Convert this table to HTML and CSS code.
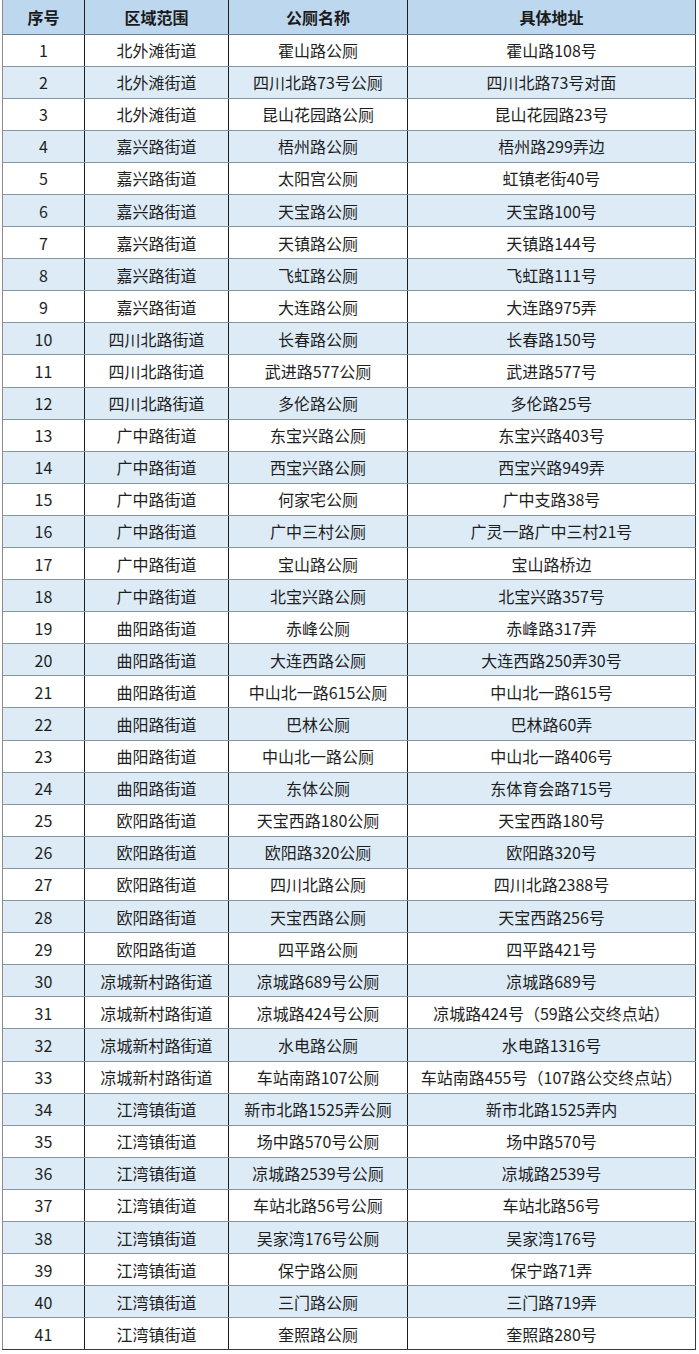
FILE: index.html
```html
<!DOCTYPE html>
<html lang="zh-CN">
<head>
<meta charset="utf-8">
<title>公厕列表</title>
<link rel="stylesheet" href="styles.css">
</head>
<body>
<table class="toilets">
<colgroup>
<col class="c-no"><col class="c-area"><col class="c-name"><col class="c-addr">
</colgroup>
<thead>
<tr><th>序号</th><th>区域范围</th><th>公厕名称</th><th>具体地址</th></tr>
</thead>
<tbody>
<tr><td>1</td><td>北外滩街道</td><td>霍山路公厕</td><td>霍山路108号</td></tr>
<tr><td>2</td><td>北外滩街道</td><td>四川北路73号公厕</td><td>四川北路73号对面</td></tr>
<tr><td>3</td><td>北外滩街道</td><td>昆山花园路公厕</td><td>昆山花园路23号</td></tr>
<tr><td>4</td><td>嘉兴路街道</td><td>梧州路公厕</td><td>梧州路299弄边</td></tr>
<tr><td>5</td><td>嘉兴路街道</td><td>太阳宫公厕</td><td>虹镇老街40号</td></tr>
<tr><td>6</td><td>嘉兴路街道</td><td>天宝路公厕</td><td>天宝路100号</td></tr>
<tr><td>7</td><td>嘉兴路街道</td><td>天镇路公厕</td><td>天镇路144号</td></tr>
<tr><td>8</td><td>嘉兴路街道</td><td>飞虹路公厕</td><td>飞虹路111号</td></tr>
<tr><td>9</td><td>嘉兴路街道</td><td>大连路公厕</td><td>大连路975弄</td></tr>
<tr><td>10</td><td>四川北路街道</td><td>长春路公厕</td><td>长春路150号</td></tr>
<tr><td>11</td><td>四川北路街道</td><td>武进路577公厕</td><td>武进路577号</td></tr>
<tr><td>12</td><td>四川北路街道</td><td>多伦路公厕</td><td>多伦路25号</td></tr>
<tr><td>13</td><td>广中路街道</td><td>东宝兴路公厕</td><td>东宝兴路403号</td></tr>
<tr><td>14</td><td>广中路街道</td><td>西宝兴路公厕</td><td>西宝兴路949弄</td></tr>
<tr><td>15</td><td>广中路街道</td><td>何家宅公厕</td><td>广中支路38号</td></tr>
<tr><td>16</td><td>广中路街道</td><td>广中三村公厕</td><td>广灵一路广中三村21号</td></tr>
<tr><td>17</td><td>广中路街道</td><td>宝山路公厕</td><td>宝山路桥边</td></tr>
<tr><td>18</td><td>广中路街道</td><td>北宝兴路公厕</td><td>北宝兴路357号</td></tr>
<tr><td>19</td><td>曲阳路街道</td><td>赤峰公厕</td><td>赤峰路317弄</td></tr>
<tr><td>20</td><td>曲阳路街道</td><td>大连西路公厕</td><td>大连西路250弄30号</td></tr>
<tr><td>21</td><td>曲阳路街道</td><td>中山北一路615公厕</td><td>中山北一路615号</td></tr>
<tr><td>22</td><td>曲阳路街道</td><td>巴林公厕</td><td>巴林路60弄</td></tr>
<tr><td>23</td><td>曲阳路街道</td><td>中山北一路公厕</td><td>中山北一路406号</td></tr>
<tr><td>24</td><td>曲阳路街道</td><td>东体公厕</td><td>东体育会路715号</td></tr>
<tr><td>25</td><td>欧阳路街道</td><td>天宝西路180公厕</td><td>天宝西路180号</td></tr>
<tr><td>26</td><td>欧阳路街道</td><td>欧阳路320公厕</td><td>欧阳路320号</td></tr>
<tr><td>27</td><td>欧阳路街道</td><td>四川北路公厕</td><td>四川北路2388号</td></tr>
<tr><td>28</td><td>欧阳路街道</td><td>天宝西路公厕</td><td>天宝西路256号</td></tr>
<tr><td>29</td><td>欧阳路街道</td><td>四平路公厕</td><td>四平路421号</td></tr>
<tr><td>30</td><td>凉城新村路街道</td><td>凉城路689号公厕</td><td>凉城路689号</td></tr>
<tr><td>31</td><td>凉城新村路街道</td><td>凉城路424号公厕</td><td>凉城路424号（59路公交终点站）</td></tr>
<tr><td>32</td><td>凉城新村路街道</td><td>水电路公厕</td><td>水电路1316号</td></tr>
<tr><td>33</td><td>凉城新村路街道</td><td>车站南路107公厕</td><td>车站南路455号（107路公交终点站）</td></tr>
<tr><td>34</td><td>江湾镇街道</td><td>新市北路1525弄公厕</td><td>新市北路1525弄内</td></tr>
<tr><td>35</td><td>江湾镇街道</td><td>场中路570号公厕</td><td>场中路570号</td></tr>
<tr><td>36</td><td>江湾镇街道</td><td>凉城路2539号公厕</td><td>凉城路2539号</td></tr>
<tr><td>37</td><td>江湾镇街道</td><td>车站北路56号公厕</td><td>车站北路56号</td></tr>
<tr><td>38</td><td>江湾镇街道</td><td>吴家湾176号公厕</td><td>吴家湾176号</td></tr>
<tr><td>39</td><td>江湾镇街道</td><td>保宁路公厕</td><td>保宁路71弄</td></tr>
<tr><td>40</td><td>江湾镇街道</td><td>三门路公厕</td><td>三门路719弄</td></tr>
<tr><td>41</td><td>江湾镇街道</td><td>奎照路公厕</td><td>奎照路280号</td></tr>
</tbody>
</table>
</body>
</html>
```
FILE: styles.css
```css
html, body {
  margin: 0;
  padding: 0;
  background: #ffffff;
}

body {
  padding-left: 2px;
  font-family: "Noto Sans CJK SC", "Noto Sans", sans-serif;
  color: #1e1e1e;
}

.toilets {
  width: 693px;
  table-layout: fixed;
  border-collapse: collapse;
  font-size: 16px;
  line-height: 1;
}

.c-no { width: 82px; }
.c-area { width: 144px; }
.c-name { width: 179px; }
.c-addr { width: 288px; }

.toilets th,
.toilets td {
  padding: 0;
  text-align: center;
  vertical-align: middle;
  white-space: nowrap;
  border-left: 1px solid #1c1c1c;
  border-right: 1px solid #1c1c1c;
  border-bottom: 1px solid #8595a8;
}

.toilets th:first-child,
.toilets td:first-child {
  border-left-color: #8c8c8c;
}

.toilets th:last-child,
.toilets td:last-child {
  border-right-color: #3a3a3a;
}

.toilets thead tr {
  height: 34px;
  background: #bdd7ee;
}

.toilets th {
  font-weight: 700;
  font-size: 16px;
  color: #1a1a1a;
  border-bottom-color: #6f7f92;
}

.toilets tbody tr {
  height: 32.1px;
  background: #ffffff;
}

.toilets tbody tr:nth-child(even) {
  background: #ddebf7;
}

.toilets tbody tr:last-child td {
  border-bottom-color: #3a3a3a;
}
```
